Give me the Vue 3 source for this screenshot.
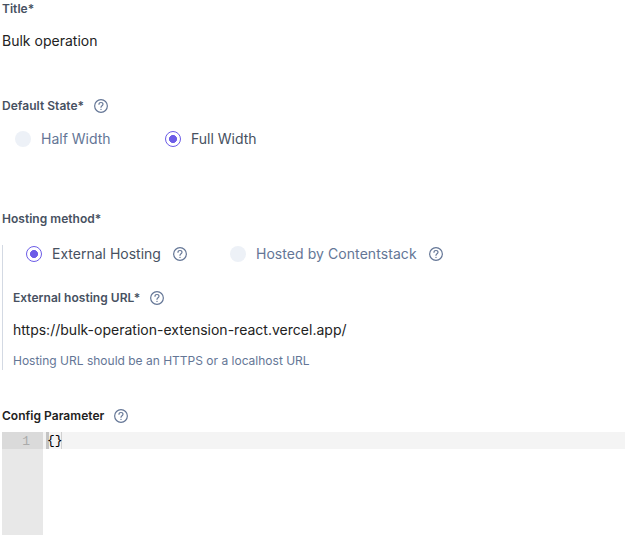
<script setup>
import { h } from 'vue'

const HelpIcon = () =>
  h('svg', { class: 'help', width: 14, height: 14, viewBox: '0 0 14 14', fill: 'none', stroke: '#647696', 'stroke-linecap': 'round' }, [
    h('circle', { cx: 7, cy: 7, r: 6.35, 'stroke-width': 1.2 }),
    h('path', { d: 'M5 5.3C5 4.1 5.8 3.5 7 3.5S9 4.2 9 5.3C9 6.8 7 6.7 7 8.3', 'stroke-width': 1.15 }),
    h('circle', { cx: 7, cy: 10.4, r: 0.65, fill: '#647696', stroke: 'none' })
  ])

const states = [
  { label: 'Half Width', on: false },
  { label: 'Full Width', on: true }
]
const hosts = [
  { label: 'External Hosting', on: true },
  { label: 'Hosted by Contentstack', on: false }
]
</script>

<template>
  <main class="form">
    <section class="field title-field">
      <div class="label"><span>Title*</span></div>
      <div class="value">Bulk operation</div>
    </section>

    <section class="field state-field">
      <div class="label"><span>Default State*</span><HelpIcon /></div>
      <div class="radios state-radios">
        <div v-for="s in states" :key="s.label" class="radio" :class="{ on: s.on }">
          <i class="dot"></i><span>{{ s.label }}</span>
        </div>
      </div>
    </section>

    <section class="field host-field">
      <div class="label"><span>Hosting method*</span></div>
      <div class="group">
        <div class="radios host-radios">
          <div v-for="s in hosts" :key="s.label" class="radio" :class="{ on: s.on }">
            <i class="dot"></i><span>{{ s.label }}</span><HelpIcon />
          </div>
        </div>
        <div class="label url-label"><span>External hosting URL*</span><HelpIcon /></div>
        <div class="value url">https://bulk-operation-extension-react.vercel.app/</div>
        <div class="hint">Hosting URL should be an HTTPS or a localhost URL</div>
      </div>
    </section>

    <section class="config-field">
      <div class="label dark"><span>Config Parameter</span><HelpIcon /></div>
      <div class="editor">
        <div class="gutter"><div class="num">1</div></div>
        <div class="code"><div class="line"><span class="braces">{}</span></div></div>
      </div>
    </section>
  </main>
</template>

<style>
body {
  background: #fff;
  overflow: hidden;
}
</style>

<style scoped>
.form {
  box-sizing: border-box;
  height: 535px;
  padding-left: 2px;
  display: flex;
  flex-direction: column;
  font-family: Inter, sans-serif;
  overflow: hidden;
}
.label {
  display: flex;
  align-items: center;
  gap: 10px;
  height: 18px;
  font-size: 12px;
  font-weight: 600;
  color: #475161;
  letter-spacing: 0.03px;
  white-space: nowrap;
}
.label span {
  padding-bottom: 2px;
}
.dark {
  color: #222;
}
.help {
  display: block;
  flex: none;
}
.value {
  height: 20px;
  line-height: 20px;
  font-size: 14px;
  letter-spacing: 0.01px;
  color: #222;
  white-space: nowrap;
}
.title-field {
  height: 97px;
}
.title-field .value {
  margin-top: 13px;
}
.state-field {
  height: 113px;
}
.radios {
  display: flex;
  height: 20px;
}
.radio {
  display: flex;
  align-items: center;
  font-size: 14px;
  color: #647696;
  white-space: nowrap;
}
.radio.on {
  color: #475161;
}
.radio span {
  padding-bottom: 1px;
}
.host-radios .radio:last-child {
  letter-spacing: 0.07px;
}
.radio .help {
  margin-left: 12px;
}
.dot {
  box-sizing: border-box;
  width: 16px;
  height: 16px;
  margin-right: 10px;
  border-radius: 50%;
  background: #edf1f7;
  flex: none;
}
.on .dot {
  border: 1px solid #6c5ce7;
  background: radial-gradient(circle, #6c5ce7 3.7px, #fff 4.3px);
}
.state-radios {
  margin: 14px 0 0 13px;
  gap: 54.4px;
}
.host-field {
  height: 197px;
}
.group {
  box-sizing: border-box;
  height: 125px;
  margin-top: 17px;
  padding-left: 10px;
  border-left: 1px solid #d3d9e3;
}
.host-radios {
  height: 18px;
  padding-left: 13px;
  gap: 43px;
}
.url-label {
  margin-top: 26px;
}
.url {
  margin-top: 13px;
}
.hint {
  margin-top: 12px;
  height: 18px;
  line-height: 18px;
  font-size: 12px;
  color: #647696;
}
.editor {
  display: flex;
  height: 103px;
  margin-top: 7px;
  font-family: "Liberation Mono", monospace;
}
.gutter {
  width: 41px;
  background: #e8e8e8;
  flex: none;
}
.num {
  height: 17px;
  line-height: 19px;
  padding-right: 13px;
  text-align: right;
  font-size: 13px;
  color: #aaa;
  background: #dadada;
}
.code {
  flex: 1;
}
.line {
  display: flex;
  height: 17px;
  padding-left: 3px;
  background: #f4f4f4;
  font-size: 13px;
  line-height: 18px;
  color: #000;
}
.braces {
  box-sizing: border-box;
  width: 16px;
  height: 17px;
  padding-left: 1px;
  background: linear-gradient(90deg, #c4c4c4 3px, transparent 3px, transparent calc(100% - 1px), #d0d0d0 calc(100% - 1px));
}
</style>
